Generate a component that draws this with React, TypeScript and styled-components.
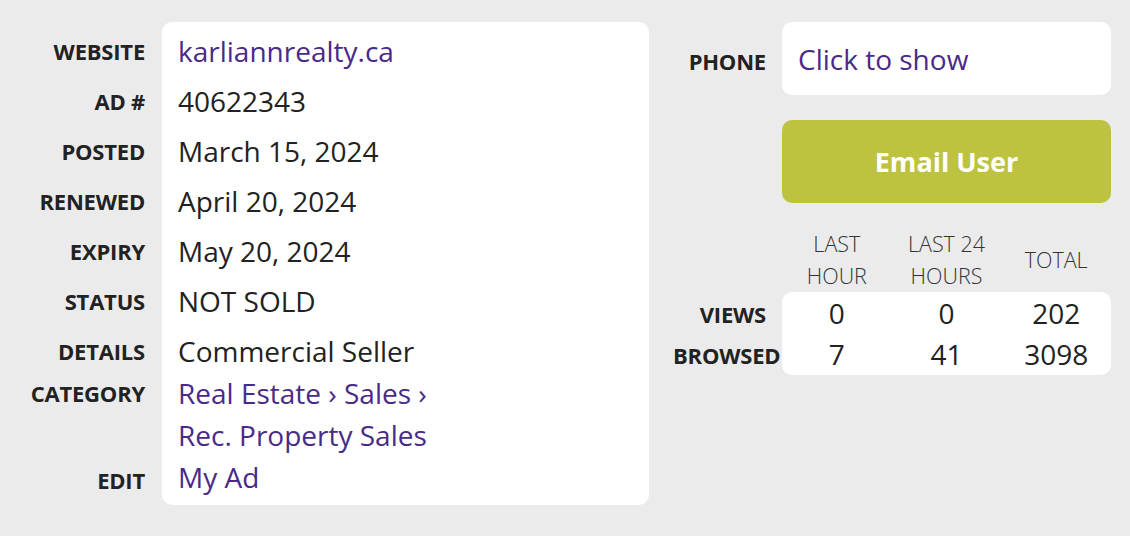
import React from 'react';
import { createGlobalStyle, default as styled } from 'styled-components';

const GlobalStyle = createGlobalStyle`
  html, body {
    margin: 0;
    padding: 0;
    background: #ebebeb;
  }
  body {
    font-family: 'Open Sans', 'Noto Sans', sans-serif;
    color: #222;
  }
`;

const Page = styled.div`
  display: grid;
  grid-template-columns: 649px 462px;
  width: 1130px;
  height: 536px;
  padding-top: 22px;
  box-sizing: border-box;
`;

const DetailsColumn = styled.div`
  display: grid;
  grid-template-columns: 162px 487px;
  align-items: start;
`;

const Card = styled.div`
  background: #fff;
  border-radius: 10px;
`;

const LabelList = styled.div`
  padding-top: 8px;
`;

const DetailsCard = styled(Card)`
  padding: 8px 16px 6px 16px;
  height: 483px;
  box-sizing: border-box;
`;

const Row = styled.div<{ $gap?: number }>`
  display: flex;
  align-items: baseline;
  margin-bottom: ${(p) => p.$gap ?? 0}px;
`;

const Label = styled.span`
  font-size: 22px;
  font-weight: 700;
  letter-spacing: -0.2px;
  text-transform: uppercase;
  text-align: right;
  color: #222;
  line-height: 42px;
  white-space: nowrap;
`;

const Value = styled.span<{ $link?: boolean }>`
  font-size: 28px;
  line-height: 42px;
  color: ${(p) => (p.$link ? '#4a2a87' : '#222')};
`;

const LabelCell = styled.div<{ $gap?: number }>`
  display: flex;
  justify-content: flex-end;
  align-items: baseline;
  padding-right: 17px;
  margin-bottom: ${(p) => p.$gap ?? 0}px;
`;

const SideColumn = styled.div`
  display: flex;
  flex-direction: column;
`;

const PhoneRow = styled.div`
  display: grid;
  grid-template-columns: 133px 329px;
  align-items: baseline;
`;

const SideLabel = styled(Label)`
  padding-right: 16px;
  line-height: normal;
`;

const PhoneBox = styled(Card)`
  height: 73px;
  display: flex;
  align-items: center;
  padding: 0 16px;
  box-sizing: border-box;
  font-size: 28px;
  color: #4a2a87;
  cursor: pointer;
`;

const EmailButton = styled.button`
  margin: 25px 0 0 133px;
  width: 329px;
  height: 83px;
  border: none;
  border-radius: 10px;
  background: #bdc341;
  color: #fff;
  font-family: 'Open Sans', 'Noto Sans', sans-serif;
  font-size: 27px;
  font-weight: 700;
  cursor: pointer;
`;

const StatsHead = styled.div`
  display: grid;
  grid-template-columns: 133px repeat(3, 1fr);
  width: 462px;
  margin-top: 25px;
  align-items: center;
`;

const HeadCell = styled.div`
  font-size: 21.5px;
  font-weight: 300;
  line-height: 32px;
  text-align: center;
  color: #333;
  text-transform: uppercase;
`;

const StatsBody = styled.div`
  display: grid;
  grid-template-columns: 133px 1fr;
`;

/* labels sit above the card so that BROWSED can run over its edge */
const StatLabels = styled.div`
  position: relative;
  z-index: 1;
  display: flex;
  flex-direction: column;
  padding: 2px 0 0 24px;
`;

const StatLabel = styled(Label)`
  width: 93px;
  line-height: 41px;
`;

const StatsCard = styled(Card)`
  height: 83px;
  display: grid;
  grid-template-columns: repeat(3, 1fr);
  grid-auto-rows: 41px;
  padding-top: 1px;
  box-sizing: border-box;
`;

const StatValue = styled.div`
  font-size: 28px;
  line-height: 41px;
  text-align: center;
  color: #222;
`;

const Lines = styled.div`
  display: flex;
  flex-direction: column;
`;

const EditLabel = styled(Label)`
  padding-top: 3px;
`;

type Detail = { label: string; lines: string[]; link?: boolean; gap: number };

const details: Detail[] = [
  { label: 'Website', lines: ['karliannrealty.ca'], link: true, gap: 8 },
  { label: 'Ad #', lines: ['40622343'], gap: 8 },
  { label: 'Posted', lines: ['March 15, 2024'], gap: 8 },
  { label: 'Renewed', lines: ['April 20, 2024'], gap: 8 },
  { label: 'Expiry', lines: ['May 20, 2024'], gap: 8 },
  { label: 'Status', lines: ['NOT SOLD'], gap: 8 },
  { label: 'Details', lines: ['Commercial Seller'], gap: 0 },
  { label: 'Category', lines: ['Real Estate › Sales ›', 'Rec. Property Sales'], link: true, gap: 0 },
  { label: 'Edit', lines: ['My Ad'], link: true, gap: 0 },
];

const stats = [
  { label: 'Views', values: ['0', '0', '202'] },
  { label: 'Browsed', values: ['7', '41', '3098'] },
];

export default function App() {
  return (
    <>
      <GlobalStyle />
      <Page>
        <DetailsColumn>
          <LabelList>
            {details.map((d) => (
              <LabelCell key={d.label} $gap={d.gap + (d.lines.length - 1) * 42}>
                {d.label === 'Edit' ? <EditLabel>{d.label}</EditLabel> : <Label>{d.label}</Label>}
              </LabelCell>
            ))}
          </LabelList>
          <DetailsCard>
            {details.map((d) => (
              <Row key={d.label} $gap={d.gap}>
                <Lines>
                  {d.lines.map((line) => (
                    <Value key={line} $link={d.link}>
                      {line}
                    </Value>
                  ))}
                </Lines>
              </Row>
            ))}
          </DetailsCard>
        </DetailsColumn>

        <SideColumn>
          <PhoneRow>
            <SideLabel>Phone</SideLabel>
            <PhoneBox>Click to show</PhoneBox>
          </PhoneRow>
          <EmailButton>Email User</EmailButton>
          <StatsHead>
            <span />
            <HeadCell>Last<br />Hour</HeadCell>
            <HeadCell>Last 24<br />Hours</HeadCell>
            <HeadCell>Total</HeadCell>
          </StatsHead>
          <StatsBody>
            <StatLabels>
              {stats.map((s) => (
                <StatLabel key={s.label}>{s.label}</StatLabel>
              ))}
            </StatLabels>
            <StatsCard>
              {stats.flatMap((s) =>
                s.values.map((v, i) => <StatValue key={s.label + i}>{v}</StatValue>)
              )}
            </StatsCard>
          </StatsBody>
        </SideColumn>
      </Page>
    </>
  );
}
